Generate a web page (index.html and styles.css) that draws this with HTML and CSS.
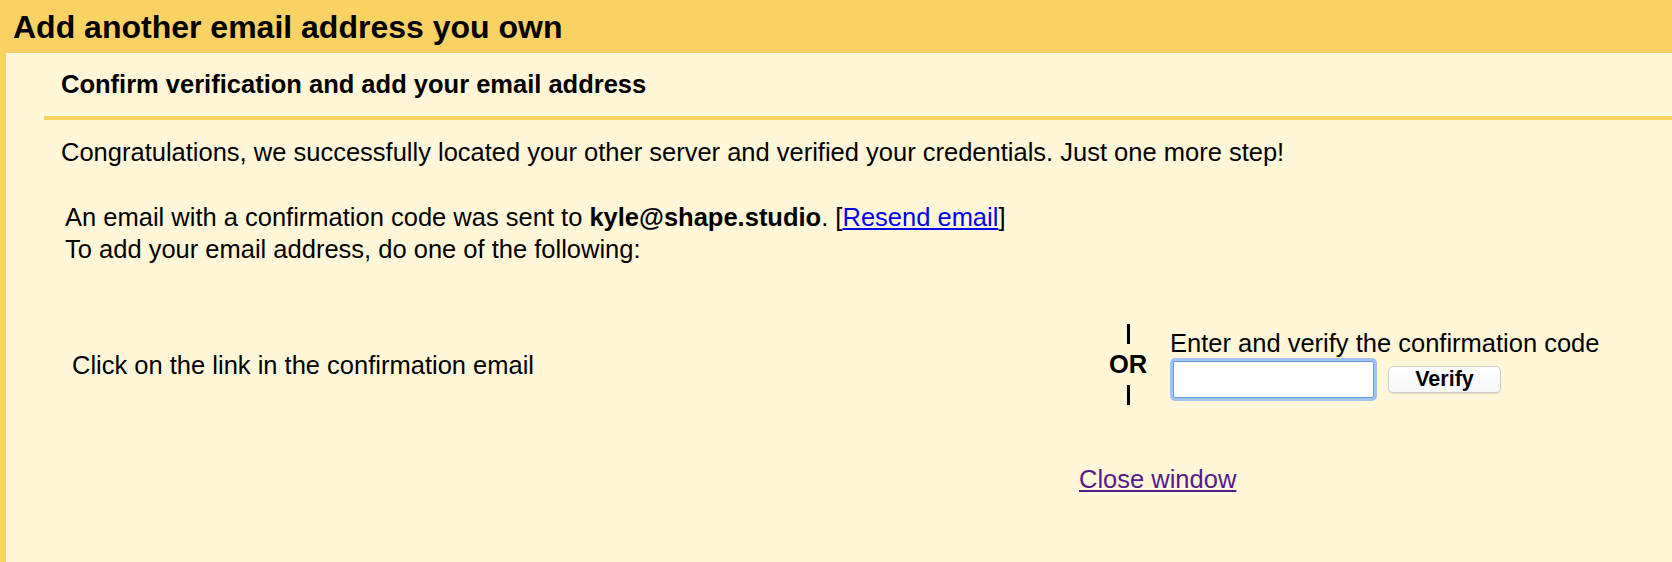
FILE: index.html
```html
<!DOCTYPE html>
<html lang="en">
<head>
<meta charset="utf-8">
<title>Add another email address you own</title>
<link rel="stylesheet" href="styles.css">
</head>
<body>
<div class="page">
  <h1 class="title">Add another email address you own</h1>
  <div class="panel">
    <div class="subhead">
      <h2 class="subhead-text">Confirm verification and add your email address</h2>
    </div>
    <div class="content">
      <p class="intro">Congratulations, we successfully located your other server and verified your credentials. Just one more step!</p>
      <div class="message">
        <div class="line">An email with a confirmation code was sent to <b>kyle@shape.studio</b>. [<a class="link" href="#">Resend email</a>]</div>
        <div class="line">To add your email address, do one of the following:</div>
      </div>
      <div class="options">
        <div class="opt-left">Click on the link in the confirmation email</div>
        <div class="opt-or">
          <span class="bar bar-top"></span>
          <span class="or-text">OR</span>
          <span class="bar bar-bottom"></span>
        </div>
        <div class="opt-right">
          <div class="opt-label">Enter and verify the confirmation code</div>
          <div class="verify-row">
            <input class="code-input" type="text" aria-label="Confirmation code">
            <button class="verify-btn" type="button">Verify</button>
          </div>
        </div>
      </div>
      <div class="close-row"><a class="close-link" href="#">Close window</a></div>
    </div>
  </div>
</div>
</body>
</html>
```

FILE: styles.css
```css
html, body {
  margin: 0;
  padding: 0;
}
body {
  background: #fad264;
  font-family: "Liberation Sans", Arial, sans-serif;
  color: #000;
  width: 1672px;
  height: 562px;
  overflow: hidden;
}
.page {
  display: flex;
  flex-direction: column;
  height: 562px;
}
.title {
  margin: 0;
  height: 53px;
  line-height: 54px;
  font-size: 32px;
  font-weight: bold;
  padding-left: 13px;
  white-space: nowrap;
}
.panel {
  flex: 1;
  margin-left: 6px;
  background: #fff7d7;
}
.subhead {
  margin-left: 38px;
  border-bottom: 4px solid #fad264;
  padding: 16px 0 17px 17px;
}
.subhead-text {
  margin: 0;
  font-size: 25.5px;
  line-height: 30px;
  font-weight: bold;
}
.content {
  padding-left: 55px;
  font-size: 25.5px;
  line-height: 30px;
}
.intro {
  margin: 17px 0 0 0;
}
.message {
  margin: 34px 0 0 4px;
  line-height: 32px;
}
.link {
  color: #0000ee;
  text-decoration: underline;
}
.options {
  display: flex;
  align-items: center;
  margin-top: 55px;
}
.opt-left {
  width: 1037px;
  padding-left: 11px;
  flex: none;
}
.opt-or {
  width: 38px;
  display: flex;
  flex-direction: column;
  align-items: center;
  flex: none;
}
.bar {
  display: block;
  width: 3px;
  height: 20px;
  background: #000;
}
.bar-top {
  margin: 4px 0 5px;
}
.bar-bottom {
  margin: 5px 0 4px;
}
.or-text {
  display: block;
  font-weight: bold;
  line-height: 31px;
}
.opt-right {
  margin-left: 23px;
}
.opt-label {
  line-height: 30px;
}
.verify-row {
  display: flex;
  align-items: center;
  gap: 11px;
}
.code-input {
  box-sizing: border-box;
  width: 201px;
  height: 37px;
  margin: 3px;
  border: 1px solid #6a9ce0;
  border-radius: 2px;
  box-shadow: 0 0 0 3px #9fc2f2;
  background: #fff;
  outline: none;
  padding: 0 6px;
  font: inherit;
}
.verify-btn {
  box-sizing: border-box;
  width: 113px;
  height: 27px;
  border: 1px solid #cfcfcf;
  border-radius: 5px;
  background: linear-gradient(#ffffff, #f6f6f6);
  font-family: "Liberation Sans", Arial, sans-serif;
  font-weight: bold;
  font-size: 21.5px;
  line-height: 25px;
  padding: 0;
  color: #000;
  box-shadow: 0 1px 1px rgba(0, 0, 0, 0.12);
}
.close-row {
  margin-top: 55px;
  padding-left: 1018px;
}
.close-link {
  color: #551a8b;
  text-decoration: underline;
}
```
